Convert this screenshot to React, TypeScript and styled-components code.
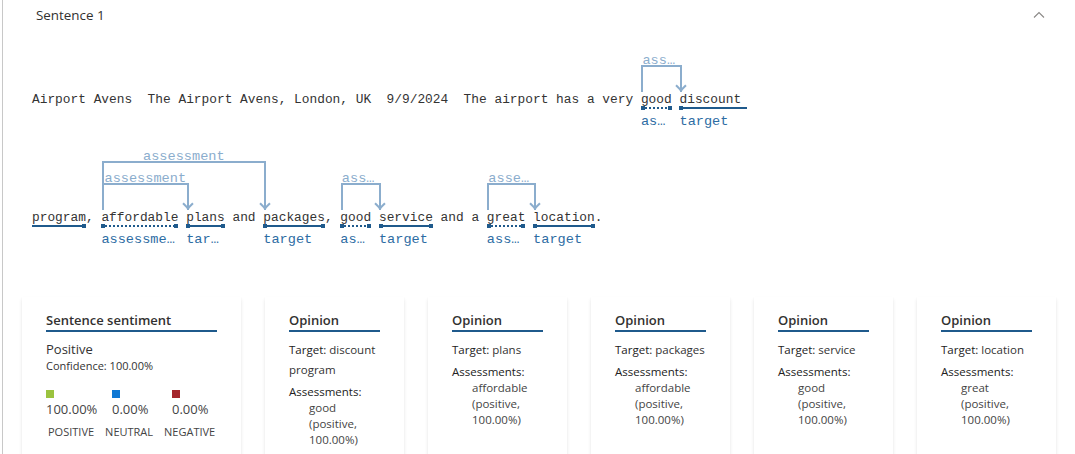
import React from "react";
import styled, { createGlobalStyle, css } from "styled-components";

const Global = createGlobalStyle`
  html, body { margin: 0; padding: 0; background: #fff; overflow: hidden; }
  body { font-family: "Open Sans", "Noto Sans", sans-serif; color: #323130; }
`;

const MONO = `"Liberation Mono", "DejaVu Sans Mono", monospace`;
const DARK = "#1f5a8c";
const LABEL = "#2d6ca3";
const ARC = "#8badcd";

const Panel = styled.div`
  margin-left: 2px;
  border-left: 1px solid #c8c8c8;
  min-height: 454px;
`;

const Header = styled.div`
  height: 30px;
  display: flex;
  align-items: center;
  justify-content: space-between;
  padding: 0 30px 0 33px;
`;

const HeaderTitle = styled.div`
  font-size: 13.4px;
  color: #323130;
`;

const Sentence = styled.div`
  padding-left: 29px;
`;

const Line = styled.div`
  height: 118px;
  box-sizing: border-box;
  padding-top: 62px;
`;

const TextRow = styled.div`
  font-family: ${MONO};
  font-size: 12.85px;
  line-height: 16px;
  white-space: pre;
  color: #333;
  display: flex;
`;

const Token = styled.span`
  position: relative;
  display: inline-block;
`;

const Underline = styled.span<{ $dotted: boolean; $openStart?: boolean; $openEnd?: boolean }>`
  position: absolute;
  left: 0;
  right: ${(p) => (p.$openEnd ? "2px" : "0")};
  top: calc(100% - 1px);
  height: 2px;
  ${(p) =>
    p.$dotted
      ? css`
          background: repeating-linear-gradient(90deg, ${DARK} 0 2px, transparent 2px 4px);
        `
      : css`
          background: ${DARK};
        `}
  &::before, &::after {
    content: "";
    position: absolute;
    top: -1px;
    width: 4px;
    height: 4px;
    background: ${DARK};
  }
  &::before {
    left: 0;
    display: ${(p) => (p.$openStart ? "none" : "block")};
  }
  &::after {
    right: 0;
    display: ${(p) => (p.$openEnd ? "none" : "block")};
  }
`;

const TokenLabel = styled.span`
  position: absolute;
  left: 0;
  right: 0;
  top: calc(100% + 7px);
  font-size: 13.6px;
  line-height: 14px;
  color: ${LABEL};
  overflow: hidden;
  text-overflow: ellipsis;
  white-space: nowrap;
`;

const Arc = styled.span<{ $span: number; $level: number }>`
  position: absolute;
  left: 0.5px;
  width: calc(${(p) => p.$span} * 7.71px + 2px);
  top: ${(p) => -27 - (p.$level - 1) * 22}px;
  height: ${(p) => 27 + (p.$level - 1) * 22}px;
  box-sizing: border-box;
  border: 2px solid ${ARC};
  border-bottom: none;
  &::after {
    content: "";
    position: absolute;
    right: -5px;
    bottom: 2px;
    width: 8px;
    height: 8px;
    box-sizing: border-box;
    border-right: 2px solid ${ARC};
    border-bottom: 2px solid ${ARC};
    transform: rotate(45deg);
  }
`;

const ArcLabel = styled.span`
  position: absolute;
  left: -1px;
  right: -1px;
  top: -13px;
  font-size: 13.6px;
  line-height: 14px;
  text-align: center;
  color: ${ARC};
  overflow: hidden;
  text-overflow: ellipsis;
  white-space: nowrap;
`;

const CardRow = styled.div`
  margin-top: 31px;
  padding-left: 19px;
  display: flex;
  gap: 24px;
  align-items: flex-start;
`;

const Card = styled.div<{ $wide?: boolean }>`
  width: ${(p) => (p.$wide ? 219 : 139)}px;
  height: 180px;
  box-sizing: border-box;
  padding: 14px 24px;
  background: #fff;
  box-shadow: 0 1.6px 3.6px rgba(0, 0, 0, 0.1), 0 0.3px 0.9px rgba(0, 0, 0, 0.08);
`;

const CardTitle = styled.div`
  font-size: 13px;
  font-weight: 600;
  line-height: 18px;
  color: #323130;
  padding-bottom: 1px;
  border-bottom: 2px solid ${DARK};
`;

const SentimentName = styled.div`
  margin-top: 8px;
  font-size: 13px;
  line-height: 18px;
  color: #333;
`;

const Confidence = styled.div`
  font-size: 11px;
  line-height: 16px;
  color: #333;
`;

const ScoreGrid = styled.div`
  margin-top: 16px;
  display: grid;
  grid-template-columns: 66px 60px auto;
`;

const Swatch = styled.div<{ $color: string }>`
  width: 8px;
  height: 8px;
  background: ${(p) => p.$color};
`;

const ScoreValue = styled.div`
  font-size: 13px;
  line-height: 20px;
  color: #444;
  margin-top: 1px;
`;

const ScoreLabels = styled.div`
  display: flex;
  gap: 11px;
  padding-left: 2px;
  margin-top: 5px;
  font-size: 11px;
  line-height: 16px;
  color: #444;
`;

const OpinionBlock = styled.div`
  margin-top: 8px;
  font-size: 11.5px;
  line-height: 20px;
  color: #333;
`;

const FieldName = styled.span`
  color: #222;
`;

const AssessHead = styled.div`
  margin-top: 4px;
  font-size: 11.5px;
  line-height: 16px;
  color: #222;
`;

const AssessValue = styled.div`
  padding-left: 20px;
  font-size: 11.5px;
  line-height: 16px;
  color: #444;
`;

type ArcDef = { span: number; level: number };
type Ann = {
  t: string;
  kind: "a" | "t";
  label?: string;
  openStart?: boolean;
  openEnd?: boolean;
  arcs?: ArcDef[];
};
type Seg = string | Ann;

const lines: Seg[][] = [
  [
    "Airport Avens  The Airport Avens, London, UK  9/9/2024  The airport has a very ",
    { t: "good", kind: "a", label: "assessment", arcs: [{ span: 5, level: 1 }] },
    " ",
    { t: "discount ", kind: "t", label: "target", openEnd: true },
  ],
  [
    { t: "program", kind: "t", openStart: true },
    ", ",
    {
      t: "affordable",
      kind: "a",
      label: "assessment",
      arcs: [
        { span: 21, level: 2 },
        { span: 11, level: 1 },
      ],
    },
    " ",
    { t: "plans", kind: "t", label: "target" },
    " and ",
    { t: "packages", kind: "t", label: "target" },
    ", ",
    { t: "good", kind: "a", label: "assessment", arcs: [{ span: 5, level: 1 }] },
    " ",
    { t: "service", kind: "t", label: "target" },
    " and a ",
    { t: "great", kind: "a", label: "assessment", arcs: [{ span: 6, level: 1 }] },
    " ",
    { t: "location", kind: "t", label: "target" },
    ".",
  ],
];

const opinions = [
  { target: "discount program", value: "good" },
  { target: "plans", value: "affordable" },
  { target: "packages", value: "affordable" },
  { target: "service", value: "good" },
  { target: "location", value: "great" },
];

function renderSeg(s: Seg, i: number) {
  if (typeof s === "string") return <span key={i}>{s}</span>;
  return (
    <Token key={i}>
      {s.t}
      {s.arcs?.map((a, j) => (
        <Arc key={j} $span={a.span} $level={a.level}>
          <ArcLabel>assessment</ArcLabel>
        </Arc>
      ))}
      <Underline $dotted={s.kind === "a"} $openStart={s.openStart} $openEnd={s.openEnd} />
      {s.label && <TokenLabel>{s.label}</TokenLabel>}
    </Token>
  );
}

export default function App() {
  return (
    <>
      <Global />
      <Panel>
        <Header>
          <HeaderTitle>Sentence 1</HeaderTitle>
          <svg width="12" height="8" viewBox="0 0 12 8" fill="none">
            <polyline points="1,6.5 6,1.5 11,6.5" stroke="#8a8886" strokeWidth="1.1" />
          </svg>
        </Header>
        <Sentence>
          {lines.map((l, i) => (
            <Line key={i}>
              <TextRow>{l.map(renderSeg)}</TextRow>
            </Line>
          ))}
        </Sentence>
        <CardRow>
          <Card $wide>
            <CardTitle>Sentence sentiment</CardTitle>
            <SentimentName>Positive</SentimentName>
            <Confidence>Confidence: 100.00%</Confidence>
            <ScoreGrid>
              <Swatch $color="#9bc33f" />
              <Swatch $color="#0f78d4" />
              <Swatch $color="#a4262c" />
              <ScoreValue>100.00%</ScoreValue>
              <ScoreValue>0.00%</ScoreValue>
              <ScoreValue>0.00%</ScoreValue>
            </ScoreGrid>
            <ScoreLabels>
              <span>POSITIVE</span>
              <span>NEUTRAL</span>
              <span>NEGATIVE</span>
            </ScoreLabels>
          </Card>
          {opinions.map((o, i) => (
            <Card key={i}>
              <CardTitle>Opinion</CardTitle>
              <OpinionBlock>
                <FieldName>Target:</FieldName> {o.target}
              </OpinionBlock>
              <AssessHead>Assessments:</AssessHead>
              <AssessValue>
                {o.value} (positive, 100.00%)
              </AssessValue>
            </Card>
          ))}
        </CardRow>
      </Panel>
    </>
  );
}
